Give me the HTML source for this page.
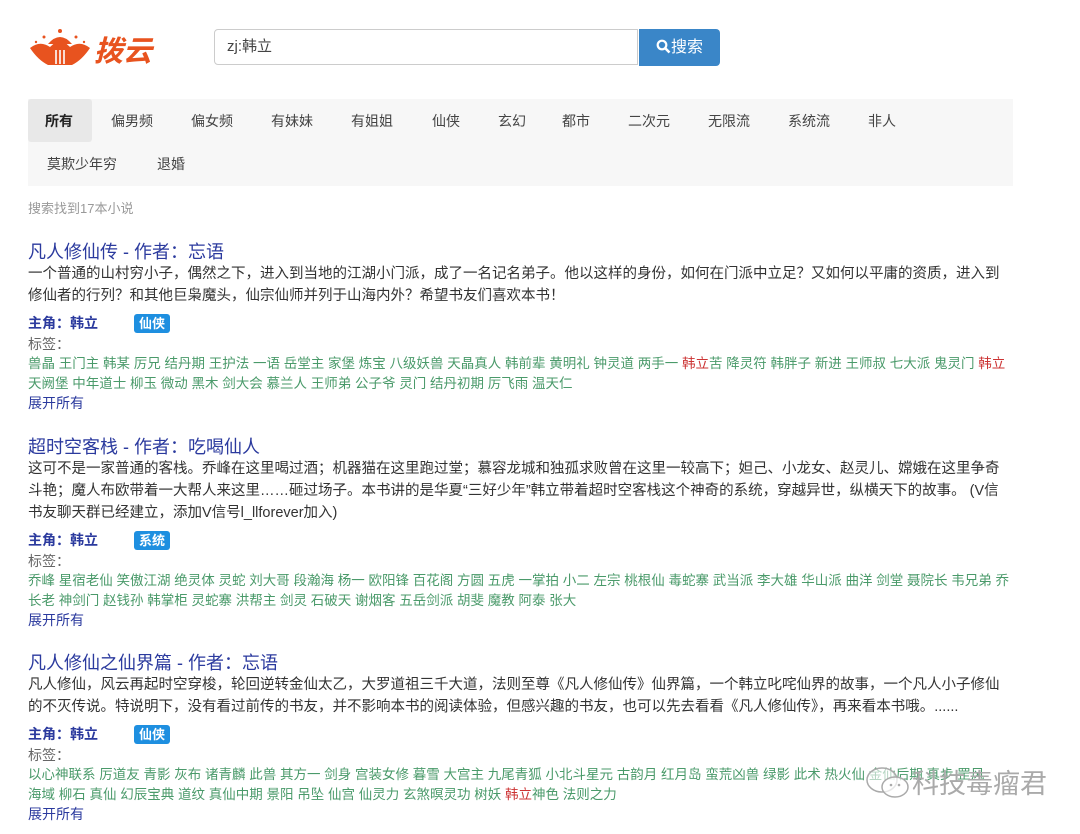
<!DOCTYPE html>
<html><head><meta charset="utf-8"><style>
body{margin:0;background:#fff;font-family:"Liberation Sans","Noto Sans CJK SC",sans-serif;color:#333;font-size:14px;width:1080px;height:834px;overflow:hidden;position:relative}
.abs{position:absolute}
.logo{left:30px;top:28px}
.search{left:214px;top:29px;width:424px;height:36px;border:1px solid #ccc;border-radius:4px 0 0 4px;box-sizing:border-box;padding:0 12px;line-height:34px;font-size:15px;color:#444}
.btn{left:639px;top:29px;width:81px;height:37px;background:#3a86c8;border-radius:0 4px 4px 0;color:#fff;font-size:16px;line-height:37px;text-align:center}
.nav{left:28px;top:99px;width:985px;height:87px;background:#f7f7f7}
.nav span{position:absolute;font-size:14px;color:#444}
.act{left:0;top:0;width:64px;height:43px;background:#e8e8e8;border-radius:3px}
.cnt{left:28px;top:198px;font-size:13px;color:#999}
.blk{position:absolute;left:28px;width:990px;line-height:21px}
.t{font-size:18px;color:#2b3a9e;line-height:24px;margin-bottom:-1px}
.d{color:#333;font-size:14.5px;line-height:22px;width:976px}
.z{margin-top:5px;color:#2b3a9e;font-weight:bold;line-height:22px}
.b{display:inline-block;background:#1e8fe0;color:#fff;font-size:13px;padding:0 5px;border-radius:3px;line-height:19px;margin-left:36px;font-weight:bold}
.l{color:#666;line-height:20px}
.g{color:#4a9a6a;line-height:20px;white-space:nowrap;overflow:hidden;font-size:13.5px}
.r{color:#c33}
.m{color:#2b3a9e;line-height:19px}
</style></head><body>
<div class="abs logo"><svg width="135" height="42" viewBox="0 0 135 42">
<path d="M0 20 Q10 12 20 19 L30 10 L40 19 Q50 12 60 20 Q52 32 42 37 L18 37 Q8 32 0 20Z" fill="#e8531f"/>
<path d="M18 16 Q30 2 42 16Z" fill="#e8531f"/>
<circle cx="30" cy="3" r="2" fill="#e8531f"/><circle cx="14" cy="9" r="1.5" fill="#e8531f"/><circle cx="46" cy="9" r="1.5" fill="#e8531f"/><circle cx="6" cy="14" r="1.2" fill="#e8531f"/><circle cx="54" cy="14" r="1.2" fill="#e8531f"/>
<line x1="26" y1="22" x2="26" y2="36" stroke="#fff" stroke-width="1.6"/><line x1="30" y1="22" x2="30" y2="36" stroke="#fff" stroke-width="1.6"/><line x1="34" y1="22" x2="34" y2="36" stroke="#fff" stroke-width="1.6"/>
<text x="64" y="33" font-size="29" font-weight="bold" font-style="italic" fill="#e8531f" font-family="Noto Sans CJK SC,sans-serif">拨云</text></svg></div>
<div class="abs search">zj:韩立</div>
<div class="abs btn"><svg width="15" height="15" viewBox="0 0 15 15" style="vertical-align:-2px"><circle cx="6" cy="6" r="4.3" fill="none" stroke="#fff" stroke-width="2.2"/><line x1="9" y1="9" x2="13.5" y2="13.5" stroke="#fff" stroke-width="2.6"/></svg>搜索</div>
<div class="abs nav">
<div class="abs act"></div>
<span style="left:17px;top:12px;font-weight:bold;color:#222">所有</span>
<span style="left:83px;top:12px">偏男频</span>
<span style="left:163px;top:12px">偏女频</span>
<span style="left:243px;top:12px">有妹妹</span>
<span style="left:323px;top:12px">有姐姐</span>
<span style="left:404px;top:12px">仙侠</span>
<span style="left:470px;top:12px">玄幻</span>
<span style="left:534px;top:12px">都市</span>
<span style="left:600px;top:12px">二次元</span>
<span style="left:680px;top:12px">无限流</span>
<span style="left:760px;top:12px">系统流</span>
<span style="left:840px;top:12px">非人</span>
<span style="left:19px;top:55px">莫欺少年穷</span>
<span style="left:129px;top:55px">退婚</span>
</div>
<div class="abs cnt">搜索找到17本小说</div>

<div class="blk" style="top:240px">
<div class="t">凡人修仙传 - 作者：忘语</div>
<div class="d">一个普通的山村穷小子，偶然之下，进入到当地的江湖小门派，成了一名记名弟子。他以这样的身份，如何在门派中立足？又如何以平庸的资质，进入到修仙者的行列？和其他巨枭魔头，仙宗仙师并列于山海内外？希望书友们喜欢本书！</div>
<div class="z">主角：韩立<span class="b">仙侠</span></div>
<div class="l">标签：</div>
<div class="g">兽晶 王门主 韩某 厉兄 结丹期 王护法 一语 岳堂主 家堡 炼宝 八级妖兽 天晶真人 韩前辈 黄明礼 钟灵道 两手一 <span class="r">韩立</span>苦 降灵符 韩胖子 新进 王师叔 七大派 鬼灵门 <span class="r">韩立</span></div>
<div class="g">天阙堡 中年道士 柳玉 微动 黑木 剑大会 慕兰人 王师弟 公子爷 灵门 结丹初期 厉飞雨 温天仁</div>
<div class="m">展开所有</div>
</div>

<div class="blk" style="top:435px">
<div class="t">超时空客栈 - 作者：吃喝仙人</div>
<div class="d">这可不是一家普通的客栈。乔峰在这里喝过酒；机器猫在这里跑过堂；慕容龙城和独孤求败曾在这里一较高下；妲己、小龙女、赵灵儿、嫦娥在这里争奇斗艳；魔人布欧带着一大帮人来这里……砸过场子。本书讲的是华夏“三好少年”韩立带着超时空客栈这个神奇的系统，穿越异世，纵横天下的故事。 (V信书友聊天群已经建立，添加V信号l_llforever加入)</div>
<div class="z">主角：韩立<span class="b">系统</span></div>
<div class="l">标签：</div>
<div class="g">乔峰 星宿老仙 笑傲江湖 绝灵体 灵蛇 刘大哥 段瀚海 杨一 欧阳锋 百花阁 方圆 五虎 一掌拍 小二 左宗 桃根仙 毒蛇寨 武当派 李大雄 华山派 曲洋 剑堂 聂院长 韦兄弟 乔</div>
<div class="g">长老 神剑门 赵钱孙 韩掌柜 灵蛇寨 洪帮主 剑灵 石破天 谢烟客 五岳剑派 胡斐 魔教 阿泰 张大</div>
<div class="m">展开所有</div>
</div>

<div class="blk" style="top:651px">
<div class="t">凡人修仙之仙界篇 - 作者：忘语</div>
<div class="d">凡人修仙，风云再起时空穿梭，轮回逆转金仙太乙，大罗道祖三千大道，法则至尊《凡人修仙传》仙界篇，一个韩立叱咤仙界的故事，一个凡人小子修仙的不灭传说。特说明下，没有看过前传的书友，并不影响本书的阅读体验，但感兴趣的书友，也可以先去看看《凡人修仙传》，再来看本书哦。......</div>
<div class="z">主角：韩立<span class="b">仙侠</span></div>
<div class="l">标签：</div>
<div class="g">以心神联系 厉道友 青影 灰布 诸青麟 此兽 其方一 剑身 宫装女修 暮雪 大宫主 九尾青狐 小北斗星元 古韵月 红月岛 蛮荒凶兽 绿影 此术 热火仙 金仙后期 真步 罡风</div>
<div class="g">海域 柳石 真仙 幻辰宝典 道纹 真仙中期 景阳 吊坠 仙宫 仙灵力 玄煞暝灵功 树妖 <span class="r">韩立</span>神色 法则之力</div>
<div class="m">展开所有</div>
</div>

<div class="abs" style="left:865px;top:766px"><svg width="46" height="36" viewBox="0 0 46 36"><ellipse cx="17" cy="14" rx="15" ry="12" fill="rgba(255,255,255,.6)" stroke="#aaa" stroke-width="1.5"/><ellipse cx="30" cy="21" rx="13" ry="10" fill="rgba(255,255,255,.7)" stroke="#aaa" stroke-width="1.5"/><circle cx="26" cy="19" r="1.3" fill="#aaa"/><circle cx="34" cy="19" r="1.3" fill="#aaa"/></svg></div>
<div class="abs" style="left:912px;top:768px;font-size:27px;color:#aaa;line-height:32px">科技毒瘤君</div>
</body></html>
